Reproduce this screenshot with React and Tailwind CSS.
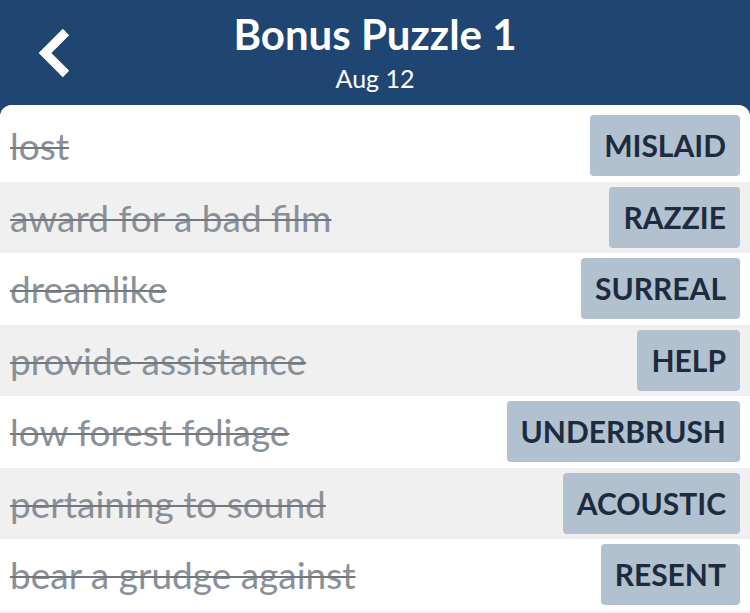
import React from "react";

const rows = [
  ["lost", "MISLAID"],
  ["award for a bad film", "RAZZIE"],
  ["dreamlike", "SURREAL"],
  ["provide assistance", "HELP"],
  ["low forest foliage", "UNDERBRUSH"],
  ["pertaining to sound", "ACOUSTIC"],
  ["bear a grudge against", "RESENT"],
];

export default function App() {
  return (
    <div className="w-[750px] h-[613px] overflow-hidden bg-[#1f4672] flex flex-col" style={{ fontFamily: "Lato, 'Open Sans', sans-serif" }}>
      <header className="h-[105px] shrink-0 relative pt-[10px]">
        <div className="absolute left-[28px] top-[22px]">
          <svg width="48" height="62" viewBox="0 0 48 62">
            <path d="M38 10 L17 31 L38 52" fill="none" stroke="#fff" strokeWidth="9" strokeLinecap="butt" strokeLinejoin="miter" />
          </svg>
        </div>
        <div className="flex flex-col items-center text-white">
          <div className="text-[42px] font-bold leading-[48px]">Bonus Puzzle 1</div>
          <div className="text-[25px] leading-[30px] mt-[5px]">Aug 12</div>
        </div>
      </header>
      <main className="flex-1 bg-[#f2f2f2] rounded-t-[12px] overflow-hidden">
        <div className="bg-white h-[5px]" />
        {rows.map(([clue, ans], i) => (
          <div
            key={i}
            className={`h-[71.5px] flex items-center justify-between pl-[10px] pr-[10px] ${i % 2 === 0 ? "bg-white" : "bg-[#f0f0f0]"}`}
          >
            <span className="text-[37px] text-[#8a9098] line-through decoration-[#73787f] decoration-2">{clue}</span>
            <span className="h-[61px] flex items-center px-[14px] rounded-[4px] bg-[#b1c1d0] text-[#1c2b3e] text-[30px] font-bold">
              {ans}
            </span>
          </div>
        ))}
      </main>
    </div>
  );
}
